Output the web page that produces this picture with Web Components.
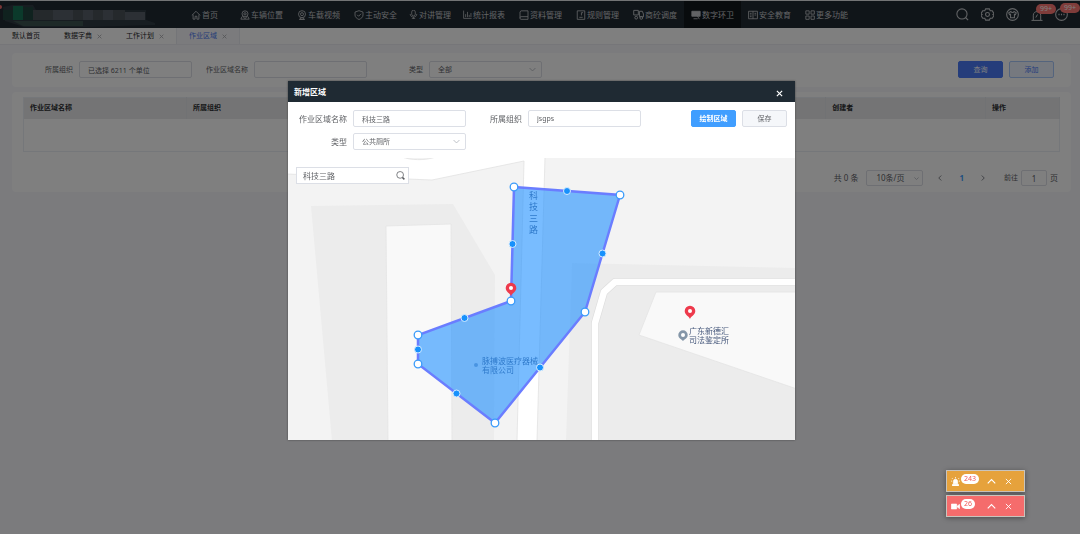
<!DOCTYPE html>
<html lang="zh-CN">
<head>
<meta charset="utf-8">
<meta name="viewport" content="width=device-width, initial-scale=1">
<title>作业区域</title>
<style>
  body {
    margin: 0;
    min-height: 100vh;
    background: #f6f6fb;
    color: #606266;
    font: 7px/12px "Noto Sans", "Noto Sans CJK SC", sans-serif;
  }
</style>
</head>
<body>
<area-page></area-page>

<script>
  const ICONS = {
    home: '<path d="M1 6.5 6 1.5l5 5M2.5 5.5V11h2.4V7.5h2.2V11h2.4V5.5"/>',
    place: '<circle cx="6" cy="4.6" r="3.6"/><circle cx="6" cy="4.6" r="1.4"/><path d="M3 7.2 6 10.5l3-3.3M2.4 8 1 11h10L9.6 8"/>',
    camera: '<circle cx="6" cy="5" r="4.2"/><circle cx="6" cy="5" r="1.8"/><path d="M4 9v2h4V9M2.5 11.3h7"/>',
    shield: '<path d="M6 .8 10.8 2.5V6c0 2.6-2.2 4.3-4.8 5.4C3.4 10.3 1.2 8.6 1.2 6V2.5zM3.8 5.8l1.7 1.7L8.5 4.5"/>',
    mic: '<rect x="3.6" y=".3" width="4.8" height="7.6" rx="2.4"/><path d="M1.6 5.3c0 5.600 8.800 5.600 8.800 0M6 9.500v2.200M3.800 11.500h4.400"/>',
    chart: '<path d="M.8.8v10.4h10.7M3.5 9.5V5.5M6 9.5V2.500M8.300 9.500V6.500M10.600 9.500V4"/>',
    book: '<path d="M2.5 1h8.3v7H2.500C.5 8 .5 11.2 2.5 11.2h8.3V8M1.2 9V2.2L2.5 1"/>',
    rule: '<path d="M1.5 1h9v10.2h-9zM4 8.8h4M6.5 6.5V3.2h2"/>',
    truck: '<path d="M.8 1.5h5v5h-5zM7 2.5h3.2l1.2 3v3H7z"/><circle cx="3.5" cy="9.5" r="1.5"/><circle cx="9" cy="9.7" r="1.5"/>',
    city: '<path d="M1 1.5h10v6H1z" fill="currentColor"/><path d="M3 10.5h5M7 6l3 5"/>',
    edu: '<path d="M.7 1.5h10.6v9H.7zM6 1.5v9M2.3 4h2M2.3 6h2M2.3 8h2M7.8 4h2M7.8 6h2"/>',
    more: '<path d="M1 1h4v4H1zM7.2 1h4v4h-4zM1 7.2h4v4H1zM7.2 7.2h4v4h-4z"/>',
    search: '<circle cx="5.5" cy="5.5" r="4.7"/><path d="m9 9 2.2 2.2"/>',
    gear: '<path d="M4.3.8h3.4l.8 1.7 1.9.1L12 5.2 11 6l1 .9-1.6 2.5-1.9.1-.8 1.7H4.3l-.8-1.7-1.9-.1L0 6.900 1 6 0 5.2l1.6-2.6 1.9-.1z"/><circle cx="6" cy="6" r="1.8"/>',
    shirt: '<circle cx="6" cy="6" r="5.4"/><path d="M4.5 3.2 2.5 4.5l.8 1.6.9-.3V9h3.6V5.8l.9.3.8-1.6-2-1.3C7 4.4 5 4.400 4.5 3.2z"/>',
    siren: '<path d="M.5 11.4h11M2.300 11V6.200c0-4.800 7.400-4.800 7.400 0V11M4.800 8.500 6.500 5.500M6 .3v1.200"/>',
    dots: '<circle cx="6" cy="6" r="5.4"/><path d="M3.2 6h1M5.5 6h1M7.8 6h1" stroke-width="1.4"/>',
    down: '<path d="m1 3.5 5 5 5-5"/>',
    up: '<path d="m1 8.5 5-5 5 5"/>',
    left: '<path d="m8.500 1-5 5 5 5"/>',
    right: '<path d="m3.500 1 5 5-5 5"/>',
    close: '<path d="m1.5 1.5 9 9M10.5 1.5l-9 9"/>',
    find: '<circle cx="5.5" cy="5.2" r="4.5"/><path d="m8.6 8.6 2.600 2.600" stroke-width="2"/>',
    alarm: '<g fill="currentColor"><path d="M3.2 9V6c0-4 5.6-4 5.6 0v3zM2 9.8h8V12H2z"/></g><path d="M6 0v1.8M1.3 1.5l1.2 1.3M10.7 1.5 9.5 2.8M0 5.5h1.5M10.5 5.5H12"/>',
    video: '<path fill="currentColor" d="M.5 2.8h7v6.4h-7zM8.5 5.2l3-1.9v5.4l-3-1.9z"/>'
  };

  function icon (name, size = 10, stroke = 1) {
    return `<svg width="${size}" height="${size}" viewBox="0 0 12 12" fill="none" stroke="currentColor" stroke-width="${stroke}" aria-hidden="true">${ICONS[name]}</svg>`;
  }

  const BASE = `
    * { box-sizing: border-box; }
    svg { display: block; flex: none; }
    button, input, select { margin: 0; font: inherit; color: inherit; }
    button { padding: 0; border: 0; background: none; cursor: pointer; }
  `;

  class BaseElement extends HTMLElement {
    connectedCallback () {
      if (this.shadowRoot) return;
      this.attachShadow({mode: 'open'}).innerHTML = `<style>${BASE}</style>${this.render()}`;
    }
    attr (name, fallback = '') {
      return this.getAttribute(name) || fallback;
    }
  }

  class NavItem extends BaseElement {
    render () {
      return `
        <style>
          :host { display: flex; }
          :host([home]) { margin-right: 8px; }
          a {
            display: flex;
            align-items: center;
            gap: 1px;
            padding: 0 7px;
            color: #c4c7ca;
            text-decoration: none;
            white-space: nowrap;
          }
          :host([tight]) a { padding: 0 5px; }
          :host([active]) a { background: #11161b; }
        </style>
        <a href="#">${icon(this.attr('icon'), Number(this.attr('size', 10)))}<slot></slot></a>
      `;
    }
  }

  class TopBar extends BaseElement {
    render () {
      return `
        <style>
          :host {
            display: flex;
            height: 28px;
            border-top: 1px solid #e6e9ea;
            background: #202a33;
            font-size: 8px;
          }
          .logo { width: 184px; }
          nav { display: flex; flex: 1; }
          .tools {
            display: flex;
            align-items: center;
            gap: 12px;
            padding-right: 12px;
            color: #c4c7ca;
          }
          .tools button { position: relative; }
          .badge {
            position: absolute;
            top: -5px;
            left: 5px;
            width: 20px;
            border-radius: 5px;
            background: #ff7874;
            color: #fff;
            font-size: 7px;
            line-height: 10px;
            text-align: center;
          }
        </style>
        <div class="logo">
          <svg width="160" height="27" viewBox="0 1 160 27" aria-hidden="true">
            <path fill="#2f3a42" d="M3 7 13 5h20l3 5h110v10l9 3v2l-70 2H24L5 21z"/>
            <path fill="#20453f" d="M3 10h10v10H3zM23 7h10v13H23z"/>
            <path fill="#167557" d="M13 6h10v14H13z"/>
            <path fill="#4b5259" d="M33 10h20v10H33zM73 10h10v10H73zM93 10h10v10H93zM113 10h12v10h-12z"/>
            <path fill="#59616a" d="M53 10h20v10H53zM83 10h10v10H83zM103 10h10v10h-10zM125 12h20v8h-20z"/>
            <path fill="#3d5450" d="M13 21h70v5H23z"/>
            <circle cx="0" cy="7" r="2" fill="#f56c6c"/>
          </svg>
        </div>
        <nav>
          <nav-item icon="home" home>首页</nav-item>
          <nav-item icon="place">车辆位置</nav-item>
          <nav-item icon="camera">车载视频</nav-item>
          <nav-item icon="shield">主动安全</nav-item>
          <nav-item icon="mic" size="9" tight>对讲管理</nav-item>
          <nav-item icon="chart" size="9">统计报表</nav-item>
          <nav-item icon="book">资料管理</nav-item>
          <nav-item icon="rule">规则管理</nav-item>
          <nav-item icon="truck" size="11">商砼调度</nav-item>
          <nav-item icon="city" active>数字环卫</nav-item>
          <nav-item icon="edu">安全教育</nav-item>
          <nav-item icon="more">更多功能</nav-item>
        </nav>
        <div class="tools">
          <button aria-label="搜索">${icon('search', 13)}</button>
          <button aria-label="设置">${icon('gear', 13)}</button>
          <button aria-label="皮肤">${icon('shirt', 13)}</button>
          <button aria-label="报警">${icon('siren', 12)}<span class="badge">99+</span></button>
          <button aria-label="消息">${icon('dots', 13)}<span class="badge">99+</span></button>
        </div>
      `;
    }
  }

  class PageTab extends BaseElement {
    render () {
      return `
        <style>
          :host {
            display: flex;
            align-items: center;
            gap: 5px;
            padding: 0 12px;
            color: #1c1d1f;
          }
          :host([active]) {
            border: solid #e9eaf0;
            border-width: 0 1px;
            background: #f6f6fb;
            color: #4a78f0;
          }
          a { color: inherit; text-decoration: none; white-space: nowrap; }
          button { color: #a9abb0; }
        </style>
        <a href="#"><slot></slot></a>
        ${this.hasAttribute('closable') ? `<button aria-label="关闭">${icon('close', 5, 2)}</button>` : ''}
      `;
    }
  }

  class TabBar extends BaseElement {
    render () {
      return `
        <style>
          :host {
            display: flex;
            height: 17px;
            border-bottom: 1px solid #ececf2;
            background: #fff;
            font-size: 7px;
          }
        </style>
        <slot></slot>
      `;
    }
  }

  const FIELD = `
    :host { display: block; }
    .field { display: flex; align-items: center; gap: 6px; }
    label {
      width: 56px;
      text-align: right;
      white-space: nowrap;
      font-size: var(--label-size, 7px);
    }
    input, select {
      width: 113px;
      height: 17px;
      padding: 0 8px;
      border: 1px solid #dcdfe6;
      border-radius: 2px;
      outline: 0;
      background: #fff;
      line-height: 15px;
    }
  `;

  class TextField extends BaseElement {
    render () {
      return `
        <style>${FIELD}</style>
        <div class="field">
          <label for="control">${this.attr('label')}</label>
          <input id="control" type="text" value="${this.attr('value')}">
        </div>
      `;
    }
  }

  class SelectField extends BaseElement {
    render () {
      return `
        <style>
          ${FIELD}
          .box { display: grid; align-items: center; }
          .box > * { grid-area: 1 / 1; }
          .box svg { justify-self: end; margin-right: 6px; color: #b4b8bf; pointer-events: none; }
          select { appearance: none; }
        </style>
        <div class="field">
          <label for="control">${this.attr('label')}</label>
          <div class="box">
            <select id="control"><option>${this.attr('value')}</option></select>
            ${icon('down', 7, 1.5)}
          </div>
        </div>
      `;
    }
  }

  class ActionButton extends BaseElement {
    render () {
      return `
        <style>
          :host { display: block; }
          button {
            display: block;
            width: 45px;
            height: 17px;
            border: 1px solid #dcdfe6;
            border-radius: 2px;
            background: #f5f7fa;
            line-height: 15px;
            text-align: center;
          }
          :host([kind="query"]) button { border-color: #4a7bf7; background: #4a7bf7; color: #fff; }
          :host([kind="add"]) button { border-color: #a9c8fa; background: #ecf3ff; color: #4a7bf7; }
          :host([kind="draw"]) button { border-color: #409eff; background: #409eff; color: #fff; font-weight: bold; }
        </style>
        <button type="button"><slot></slot></button>
      `;
    }
  }

  class FilterPanel extends BaseElement {
    render () {
      return `
        <style>
          :host {
            display: flex;
            align-items: center;
            padding: 8px 17px 9px 5px;
            border-radius: 4px;
            background: #fff;
          }
          .actions { display: flex; gap: 6px; margin-left: auto; }
        </style>
        <text-field label="所属组织" value="已选择 6211 个单位"></text-field>
        <text-field label="作业区域名称"></text-field>
        <select-field label="类型" value="全部"></select-field>
        <div class="actions">
          <action-button kind="query">查询</action-button>
          <action-button kind="add">添加</action-button>
        </div>
      `;
    }
  }

  class PageNav extends BaseElement {
    render () {
      return `
        <style>
          :host {
            display: flex;
            align-items: center;
            justify-content: flex-end;
            padding-right: 2px;
            font-size: 8px;
          }
          .size { display: grid; align-items: center; margin: 0 14px 0 8px; }
          .size > * { grid-area: 1 / 1; }
          .size svg { justify-self: end; margin-right: 4px; color: #b4b8bf; pointer-events: none; }
          select, input {
            height: 16px;
            border: 1px solid #dcdfe6;
            border-radius: 2px;
            background: #fff;
          }
          select { width: 57px; padding: 0 9px; appearance: none; }
          input { width: 26px; margin: 0 3px; padding: 0; text-align: center; }
          button { color: #85888e; }
          .current { margin: 0 16px; color: #409eff; font-weight: bold; }
          label { margin-left: 18px; font-size: 7px; }
        </style>
        <span>共 0 条</span>
        <div class="size">
          <select aria-label="每页条数"><option>10条/页</option></select>
          ${icon('down', 5, 2)}
        </div>
        <button aria-label="上一页">${icon('left', 6, 2)}</button>
        <button class="current">1</button>
        <button aria-label="下一页">${icon('right', 6, 2)}</button>
        <label for="page">前往</label>
        <input id="page" type="text" value="1">
        <span>页</span>
      `;
    }
  }

  class AreaTable extends BaseElement {
    render () {
      return `
        <style>
          :host {
            display: block;
            padding: 5px 11px 6px;
            border-radius: 4px;
            background: #fff;
          }
          table {
            width: 100%;
            border: 1px solid #ebeef5;
            border-collapse: collapse;
            table-layout: fixed;
          }
          th {
            height: 21px;
            padding: 0 6px;
            border-right: 1px solid #e2e4e9;
            background: #e9e9ea;
            color: #2c2e31;
            text-align: left;
          }
          td { height: 33px; padding: 0; }
          .first { width: 163px; }
          .last { width: 74px; }
          page-nav { margin-top: 18px; }
        </style>
        <table>
          <thead>
            <tr>
              <th class="first">作业区域名称</th><th>所属组织</th><th></th><th></th><th></th><th>创建者</th><th class="last">操作</th>
            </tr>
          </thead>
          <tbody><tr><td colspan="7"></td></tr></tbody>
        </table>
        <page-nav></page-nav>
      `;
    }
  }

  class MapSearch extends BaseElement {
    render () {
      return `
        <style>
          :host {
            display: flex;
            align-items: center;
            width: 113px;
            height: 17px;
            padding: 0 3px 0 6px;
            border: 1px solid #dcdfe6;
            box-sizing: border-box;
            background: #fff;
            font-size: 8px;
          }
          input { flex: 1; min-width: 0; padding: 0; border: 0; outline: 0; background: none; line-height: 15px; }
          button { color: #55585d; }
        </style>
        <input type="text" aria-label="搜索地点" value="科技三路">
        <button aria-label="搜索">${icon('find', 9)}</button>
      `;
    }
  }

  class AreaMap extends BaseElement {
    render () {
      const corners = [[514, 187], [620, 195], [585, 312], [495, 423], [418, 364], [418, 335], [511, 301]];
      const middles = corners.map(([x, y], i) => {
        const [nx, ny] = corners[(i + 1) % corners.length];
        return [(x + nx) / 2, (y + ny) / 2];
      });
      const dots = (points, r, attrs) => points.map(([x, y]) => `<circle cx="${x}" cy="${y}" r="${r}" ${attrs}/>`).join('');
      const pin = (x, y) => `
        <path fill="#ee3a4c" d="M${x} ${y + 8}c-1-3-5.3-4-5.3-8a5.3 5.3 0 0 1 10.6 0c0 4-4.3 5-5.3 8z"/>
        <circle cx="${x}" cy="${y}" r="2" fill="#fff"/>`;

      return `
        <style>
          :host { display: block; position: relative; background: #f3f3f3; }
          .map { width: 100%; height: auto; }
          text { font-size: 8px; }
          .road { font-size: 9px; }
          map-search { position: absolute; top: 9px; left: 8px; }
        </style>
        <svg class="map" viewBox="288 158 507 282" role="img" aria-label="地图">
          <g stroke="#e2e2e2" stroke-width=".8">
            <path fill="#fff" d="M287 157v17l145 6 92-19-7 280h20l8-284z"/>
            <path fill="#f3f3f3" d="M402 157c8 3 22 4 34 0z"/>
          </g>
          <path fill="#ececec" d="M311 206l142-2 42 71-1 166H332zM572 263l224 5v173H566z"/>
          <path fill="#f9f9f9" stroke="#e4e4e4" stroke-width=".8" d="M386 226l65-2 1 217h-64zM656 292h141v97L639 335z"/>
          <g fill="none" stroke-linejoin="round">
            <path stroke="#dedede" stroke-width="8" d="M797 282H615l-11 10-9 31v120"/>
            <path stroke="#fff" stroke-width="6.5" d="M797 282H615l-11 10-9 31v120"/>
          </g>
          <g fill="#46587c">
            <text class="road" x="529" y="199">科</text>
            <text class="road" x="529" y="210">技</text>
            <text class="road" x="529" y="222">三</text>
            <text class="road" x="529" y="233">路</text>
            <text x="482" y="364">脉搏波医疗器械</text>
            <text x="482" y="373">有限公司</text>
            <circle cx="476" cy="365" r="2" fill="#8a9bb5"/>
            <text x="689" y="334">广东新德汇</text>
            <text x="689" y="343">司法鉴定所</text>
          </g>
          <path fill="#8496a8" d="M683 341c-1-1.500-4.700-2.500-4.700-6a4.700 4.700 0 0 1 9.400 0c0 3.500-3.700 4.500-4.700 6z"/>
          <circle cx="683" cy="335" r="2" fill="#fff"/>
          <polygon points="${corners.join(' ')}" fill="#1e90ff" fill-opacity=".6" stroke="#6a7dff" stroke-width="2.5"/>
          ${dots(middles, 3.5, 'fill="#1791fc" stroke="#d5ebff" stroke-width="1"')}
          ${pin(511, 288)}
          ${pin(690, 311)}
          ${dots(corners, 3.8, 'fill="#fff" stroke="#3a9bfa" stroke-width="1.3"')}
        </svg>
        <map-search></map-search>
      `;
    }
  }

  class AreaDialog extends BaseElement {
    render () {
      return `
        <style>
          :host { display: block; background: #fff; box-shadow: 0 0 2px #444; }
          header {
            display: flex;
            align-items: center;
            justify-content: space-between;
            height: 21px;
            padding: 0 12px 0 6px;
            background: #1f2a33;
            color: #fff;
          }
          h2 { margin: 0; font-size: 8px; }
          header button { padding-top: 4px; }
          form {
            display: flex;
            align-items: flex-start;
            justify-content: space-between;
            padding: 8px 8px 8px 3px;
            --label-size: 8px;
          }
          .fields { display: grid; grid-template-columns: 175px 175px; gap: 6px 0; }
          .actions { display: flex; gap: 6px; }
        </style>
        <header>
          <h2>新增区域</h2>
          <button aria-label="关闭">${icon('close', 7, 2)}</button>
        </header>
        <form>
          <div class="fields">
            <text-field label="作业区域名称" value="科技三路"></text-field>
            <text-field label="所属组织" value="jsgps"></text-field>
            <select-field label="类型" value="公共厕所"></select-field>
          </div>
          <div class="actions">
            <action-button kind="draw">绘制区域</action-button>
            <action-button>保存</action-button>
          </div>
        </form>
        <area-map></area-map>
      `;
    }
  }

  class AlertChip extends BaseElement {
    render () {
      return `
        <style>
          :host {
            display: flex;
            align-items: center;
            box-sizing: border-box;
            width: 79px;
            height: 22px;
            padding: 0 12px 0 4px;
            border: 1px solid #c9c4bd;
            background: var(--chip-color);
            color: #fff;
            box-shadow: 0 1px 5px rgba(0, 0, 0, .4);
          }
          .count {
            margin: 0 auto 5px 1px;
            padding: 0 3px;
            border-radius: 5px;
            background: #fff;
            color: #f25555;
            font-size: 7px;
            line-height: 10px;
          }
          button + button { margin-left: 9px; }
        </style>
        ${icon(this.attr('icon'), 9)}
        <span class="count"><slot></slot></span>
        <button aria-label="展开">${icon('up', 9, 1.5)}</button>
        <button aria-label="关闭">${icon('close', 7, 1.5)}</button>
      `;
    }
  }

  class AreaPage extends BaseElement {
    render () {
      return `
        <style>
          :host { display: block; }
          main { display: grid; gap: 5px; padding: 8px 9px 8px 12px; }
          .mask {
            position: fixed;
            inset: 0;
            padding: 81px 285px 0 288px;
            background: rgba(0, 0, 0, .5);
          }
          .alerts {
            position: fixed;
            right: 55px;
            bottom: 17px;
            display: grid;
            gap: 3px;
          }
        </style>
        <top-bar></top-bar>
        <tab-bar>
          <page-tab>默认首页</page-tab>
          <page-tab closable>数据字典</page-tab>
          <page-tab closable>工作计划</page-tab>
          <page-tab closable active>作业区域</page-tab>
        </tab-bar>
        <main>
          <filter-panel></filter-panel>
          <area-table></area-table>
        </main>
        <div class="mask"><area-dialog></area-dialog></div>
        <div class="alerts">
          <alert-chip icon="alarm" style="--chip-color: #e6a23c">243</alert-chip>
          <alert-chip icon="video" style="--chip-color: #f56c6c">26</alert-chip>
        </div>
      `;
    }
  }

  customElements.define('nav-item', NavItem);
  customElements.define('top-bar', TopBar);
  customElements.define('page-tab', PageTab);
  customElements.define('tab-bar', TabBar);
  customElements.define('text-field', TextField);
  customElements.define('select-field', SelectField);
  customElements.define('action-button', ActionButton);
  customElements.define('filter-panel', FilterPanel);
  customElements.define('page-nav', PageNav);
  customElements.define('area-table', AreaTable);
  customElements.define('map-search', MapSearch);
  customElements.define('area-map', AreaMap);
  customElements.define('area-dialog', AreaDialog);
  customElements.define('alert-chip', AlertChip);
  customElements.define('area-page', AreaPage);
</script>
</body>
</html>
